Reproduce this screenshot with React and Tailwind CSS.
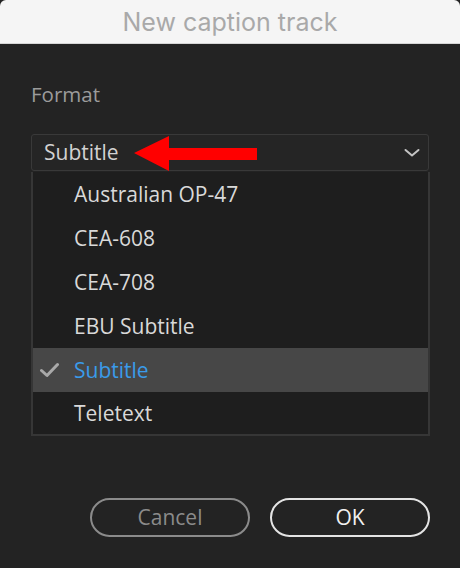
import React from "react";

const items = ["Australian OP-47", "CEA-608", "CEA-708", "EBU Subtitle", "Subtitle", "Teletext"];

export default function App() {
  return (
    <div className="w-[460px] h-[568px] bg-[#232323] flex flex-col overflow-hidden" style={{ fontFamily: '"Open Sans", "Noto Sans", sans-serif' }}>
      <div className="h-[44px] shrink-0 bg-[#f5f5f5] border-b border-[#d6d6d6] rounded-t-[6px] flex items-center justify-center pt-[2px]">
        <span className="text-[25px] text-[#a9a9a9] leading-none" style={{ fontFamily: 'Inter, "Open Sans", sans-serif' }}>New caption track</span>
      </div>
      <div className="flex flex-col px-[31px] pt-[38px]">
        <div className="text-[20.5px] leading-[24px] text-[#9b9b9b]">Format</div>
        <div className="relative mt-[28px] h-[37px] w-[398px] border border-[#393939] rounded-[3px] bg-[#252525] flex items-center justify-between pl-[12px] pr-[8px]">
          <span className="text-[21px] font-medium text-[#d2d2d2] leading-none">Subtitle</span>
          <svg width="16" height="10" viewBox="0 0 16 10">
            <path d="M1.5 2 L8 7.5 L14.5 2" fill="none" stroke="#c4c4c4" strokeWidth="2" strokeLinecap="round" strokeLinejoin="round" />
          </svg>
          <svg width="124" height="36" viewBox="0 0 124 36" className="absolute left-[102px] top-[1px]">
            <polygon points="0,17 35,0 35,12 123,12 123,24 35,24 35,35" fill="#ff0000" />
          </svg>
        </div>
        <div className="mt-[1px] w-[399px] border-2 border-t-0 border-[#363636] bg-[#1e1e1e] flex flex-col">
          {items.map((it, i) => {
            const sel = it === "Subtitle";
            const last = i === items.length - 1;
            return (
              <div key={it} className={`${last ? "h-[42px]" : "h-[44px]"} flex items-center ${sel ? "bg-[#474747]" : ""}`}>
                <div className="w-[41px] flex justify-start pl-[7px]">
                  {sel && (
                    <svg width="19" height="16" viewBox="0 0 19 16">
                      <path d="M1.5 8.5 L7 13.5 L17.5 2.5" fill="none" stroke="#a9a9a9" strokeWidth="3" strokeLinecap="round" strokeLinejoin="round" />
                    </svg>
                  )}
                </div>
                <span className={`text-[21px] font-medium leading-none ${sel ? "text-[#3a9bea]" : "text-[#d9d9d9]"}`}>{it}</span>
              </div>
            );
          })}
        </div>
        <div className="mt-[62px] flex justify-end gap-[20px] w-[399px]">
          <button className="w-[160px] h-[39px] rounded-full border-2 border-[#8b8b8b] text-[#8b8b8b] text-[21px] font-medium flex items-center justify-center">Cancel</button>
          <button className="w-[160px] h-[39px] rounded-full border-2 border-[#e4e4e4] text-[#f0f0f0] text-[21px] font-medium flex items-center justify-center">OK</button>
        </div>
      </div>
    </div>
  );
}
